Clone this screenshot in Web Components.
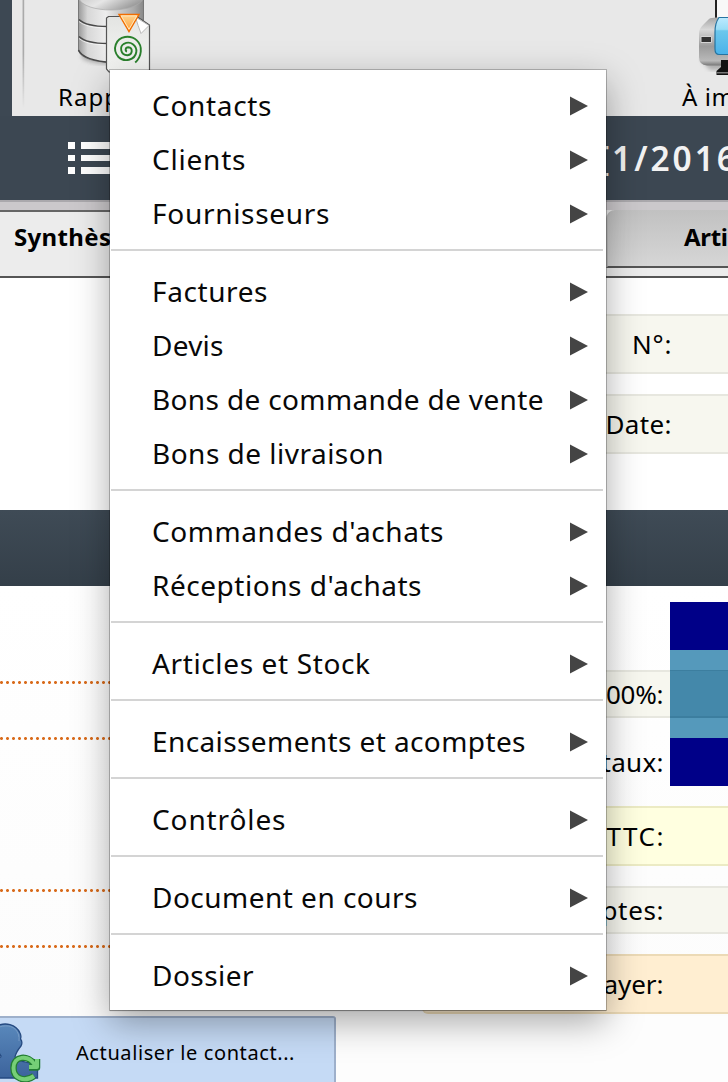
<!DOCTYPE html>
<html lang="fr">
<head>
<meta charset="utf-8">
<title>Rapports</title>
<style>
html,body{margin:0;width:728px;height:1082px;overflow:hidden;background:#fff}
body{font-family:"Noto Sans","Open Sans",sans-serif;color:#000}
</style>
</head>
<body>
<app-window></app-window>
<script>
const define = (name, html, setup) => customElements.define(name, class extends HTMLElement {
  connectedCallback() {
    if (this.shadowRoot) return;
    this.attachShadow({mode: 'open'}).innerHTML = html;
    if (setup) setup.call(this);
  }
});

/* A label whose tracking is adjusted so it spans the given width. */
define('tracked-text', `<style>:host{display:block;white-space:pre;width:max-content}span{display:inline-block}</style><span><slot></slot></span>`, function () {
  const w = parseFloat(this.getAttribute('w'));
  const span = this.shadowRoot.querySelector('span');
  const n = this.textContent.length;
  this.style.letterSpacing = ((w - span.getBoundingClientRect().width) / (n - 1)) + 'px';
  span.style.marginRight = -parseFloat(this.style.letterSpacing) + 'px';
});

define('menu-item', `<style>
:host{display:flex;height:54px;box-sizing:border-box;padding:0 18px 2px 42px;align-items:center;justify-content:space-between;font-size:28px;line-height:40px;color:#080808}
svg{display:block;width:19px;height:20px;margin-top:2px}</style>
<slot></slot><svg viewBox="0 0 19 20"><path d="M1 .5L19 10L1 19.5Z" fill="#444"/></svg>`);

define('menu-separator', `<style>:host{display:block;height:2px;margin:8px 3px 14px 1px;background:#d4d4d4}</style>`);

define('popup-menu', `<style>:host{display:block;box-sizing:border-box;width:496px;height:940px;padding:9px 0 7px;background:#fff;box-shadow:0 0 0 1px rgba(0,0,0,.22),0 1px 1px rgba(0,0,0,.22),0 12px 34px rgba(0,0,0,.34)}</style><slot></slot>`);

define('database-icon', `<style>:host{display:block;width:74px;height:72px}svg{display:block}</style>
<svg width="74" height="72" viewBox="0 0 74 72"><defs>
<linearGradient id="m"><stop stop-color="#999"/><stop offset=".14" stop-color="#d7d7d7"/><stop offset=".42" stop-color="#ededed"/><stop offset=".85" stop-color="#aaa"/><stop offset="1" stop-color="#888"/></linearGradient>
<linearGradient id="t" x2="1" y2=".5"><stop stop-color="#c0c0c0"/><stop offset=".5" stop-color="#e6e6e6"/><stop offset="1" stop-color="#999"/></linearGradient>
<filter id="b"><feGaussianBlur stdDeviation="2"/></filter></defs>
<ellipse cx="42" cy="56" rx="31" ry="8" fill="#777" opacity=".55" filter="url(#b)"/>
<path d="M8.500-8V51C14 66 68 66 73.500 51V-8Z" fill="url(#m)" stroke="#777" stroke-width="1"/>
<path d="M8.500-2C14 14 68 14 73.500-2V-8H8.500Z" fill="url(#t)" stroke="#aaa" stroke-width=".7"/>
<g fill="none" stroke="#fafafa" opacity=".7"><path d="M9 21.500C17 28.500 37 28.500 50 27.500M9 38.500C17 45.500 37 45.500 50 44.500"/></g>
<g fill="none" stroke="#484848" stroke-width="1.500"><path d="M9 19.500C17 27 37 27 50 26M9 36.500C17 44 37 44 50 43M8.500 50C12 58 25 61.500 43 62.500"/></g>
</svg>`);

define('report-badge', `<style>:host{display:block;width:46px;height:62px}svg{display:block}</style>
<svg width="46" height="62" viewBox="0 0 46 62"><defs>
<linearGradient id="o" x2="0" y2="1"><stop stop-color="#ffd592"/><stop offset="1" stop-color="#ff9e33"/></linearGradient>
<linearGradient id="p" x2="0" y2="1"><stop stop-color="#e3e4e2"/><stop offset="1" stop-color="#f6f7f5"/></linearGradient></defs>
<path d="M3.500 4.500H32L44.500 13V60H4L1.500 57V6Z" fill="url(#p)" stroke="#555" stroke-width="1.200"/>
<path d="M30.500 5L44 13.500L36 21.500Q33 14 30.500 5Z" fill="#fff" stroke="#aaa" stroke-width=".8"/>
<path d="M14 2.500H34L24 19.500Z" fill="url(#o)" stroke="#f26d00" stroke-width="1.400"/>
<path d="M16.200 3.900H31.800L24 17.300Z" fill="none" stroke="#ffe7bd"/>
<path transform="translate(-.5 0)" d="M22.500 39.500C20.500 39 20.600 35.300 23.800 35.200C28.500 35.500 28.500 42.700 23 43.200C15.800 43.300 14.800 34.500 19.500 31.800C26 28.300 32.600 33.500 31.800 40C30.500 48.500 19.500 50.500 14 45C7 37 11.500 26.500 20.500 25C30 23.700 37.200 30.500 36.300 39.500C35.900 44 33.800 47.800 30.700 50.500" fill="none" stroke="#2a812d" stroke-width="1.900"/>
</svg>`);

define('printer-icon', `<style>:host{display:block;width:30px;height:78px}svg{display:block}</style>
<svg width="30" height="78" viewBox="0 0 30 78"><defs>
<linearGradient id="g" x2="0" y2="1"><stop stop-color="#a5a5a5"/><stop offset=".25" stop-color="#d8d8d8"/><stop offset=".6" stop-color="#9b9b9b"/><stop offset=".9" stop-color="#b9b9b9"/><stop offset="1" stop-color="#777"/></linearGradient>
<linearGradient id="c" x2="0" y2="1"><stop stop-color="#bdeaff"/><stop offset=".32" stop-color="#9addf6"/><stop offset=".36" stop-color="#6cc7ec"/><stop offset="1" stop-color="#4ab2ea"/></linearGradient>
<filter id="b"><feGaussianBlur stdDeviation="2"/></filter></defs>
<path d="M2 58L12 70H30V60Z" fill="#888" opacity=".6" filter="url(#b)"/>
<path d="M17 0H19V19H17Z" fill="#222"/><path d="M19 0H30V18H19Z" fill="#f8f8f8"/>
<path d="M1 33Q1 29 5 25L11 19Q13 17.500 18 17.500H30V65.500H9Q1 65 1 57Z" fill="url(#g)"/>
<path d="M21 17.500H32V54.500H21Q17 54.500 17 49V32Q17 23 21 17.500Z" fill="url(#c)" stroke="#2674a1" stroke-width="1.200"/>
<path d="M3 36.500H13.500V42.500H3Z" fill="#333" stroke="#d4d4d4" stroke-width="1"/>
<path d="M23 60H30V75H18.500V71L23 67Z" fill="#111"/><path d="M19 72H30V73.500H19Z" fill="#777"/>
</svg>`);

define('list-icon', `<style>:host{display:grid;grid-template-columns:7px 31px;gap:6px;grid-auto-rows:6.500px}i{background:#fff}</style><i></i><i></i><i></i><i></i><i></i><i></i>`);

define('contact-icon', `<style>:host{display:block;width:42px;height:66px}svg{display:block}</style>
<svg width="42" height="66" viewBox="0 0 42 66"><defs><linearGradient id="u" x2="0" y2="1"><stop stop-color="#5988bb"/><stop offset="1" stop-color="#3c639c"/></linearGradient></defs>
<path d="M-3 8C5 4 16 6 20 15Q21.500 18 20.500 21Q23 24 21 28Q16 34 15 39C17 45 30 43 37.500 48V60H-3V40Q1 40 1 38L-3 32Z" fill="url(#u)" stroke="#254a81" stroke-width="1.300"/>
<path d="M-1 9C8 6.500 15 8 18.300 16Q19.500 20 19 23" fill="none" stroke="#769ac4"/>
<g fill="none" stroke-linejoin="round"><path d="M37 41V49.500H29M35 47C28 36 13.500 38 13.500 50C13.500 60 24 65 34 58" stroke="#237d33" stroke-width="6.500"/>
<path d="M37 41V49H29M35 47C28 36 13.500 38 13.500 50C13.500 60 24 65 34 58" stroke="#76cf77" stroke-width="4"/></g></svg>`);

define('tool-bar', `<style>:host{display:flex;height:116px;background:#3d4853;padding-left:12px;overflow:hidden}
.in{flex:1;display:flex;justify-content:space-between;background:#e8e8e8;position:relative}
.rule{width:3px;height:108px;margin-left:10px;background:linear-gradient(90deg,#ddd,#aaa,#f4f4f4);-webkit-mask-image:linear-gradient(#000 50%,transparent)}
.tool{font-size:24px;line-height:32px}.db{width:110px;margin-left:33px;margin-right:auto}.db database-icon{margin:0 0 9px 12px}
.pr{width:46px}.pr printer-icon{margin:0 0 3px 16px}
report-badge{position:absolute;left:93px;top:12px}</style>
<div class="in"><div class="rule"></div><div class="tool db"><database-icon></database-icon><tracked-text w="61">Rapp</tracked-text></div>
<div class="tool pr"><printer-icon></printer-icon><tracked-text w="52">À im</tracked-text></div><report-badge></report-badge></div>`);

define('title-bar', `<style>:host{display:flex;justify-content:space-between;height:84px;background:#3c4752;overflow:hidden}
list-icon{margin:26px 0 0 68px}.t{color:#f2f2f2;font-size:33.500px;font-weight:600;line-height:84px;width:130px}</style>
<list-icon></list-icon><div class="t"><tracked-text w="138">[1/2016</tracked-text></div>`);

define('tab-strip', `<style>:host{display:flex;box-sizing:border-box;height:78px;border-top:2px solid #aaa8ac;background:#cbc8cb;padding-top:8px;font-size:24px;font-weight:700;line-height:32px}
.a{box-sizing:border-box;height:68px;background:#ececec;border-top:2px solid #666;border-bottom:2px solid #555}
.a{width:606px;padding:9px 0 0 14px}.b{flex:1;height:68px;background:#ececec;box-sizing:border-box;border-bottom:2px solid #555}
.i{box-sizing:border-box;height:58px;border-bottom:2px solid #555;background:linear-gradient(#c1c1c1,#d6d6d6);border-left:2px solid #bbb;border-radius:9px 0 0 0;padding:11px 0 0 76px;overflow:hidden}</style>
<div class="a"><tracked-text w="97">Synthès</tracked-text></div><div class="b"><div class="i"><tracked-text w="44">Arti</tracked-text></div></div>`);

define('field-row', `<style>:host{display:flex;box-sizing:border-box;justify-content:flex-end;align-items:center;font-size:26px;padding-right:64.500px;height:60px;background:var(--c,#f7f7ef);border-top:2px solid var(--l,#e7e7df);border-bottom:2px solid var(--l,#e7e7df);border-radius:6px 0 0 6px}</style><slot></slot>`);

define('header-form', `<style>:host{display:flex;flex-direction:column;gap:20px;height:232px;box-sizing:border-box;padding:36px 0 0 422px;background:#fff}field-row{padding-right:56.500px}</style>
<field-row><tracked-text w="39.5">N°:</tracked-text></field-row><field-row><tracked-text w="66">Date:</tracked-text></field-row>`);

define('dotted-lines', `<style>:host{display:flex;flex-direction:column}i{height:3px;background:radial-gradient(circle at 1.500px 1.500px,#d86b1c 1px,rgba(240,150,80,.35) 1.700px,transparent 2px) 0 0/6px 3px repeat-x}
.l1{margin-top:95px}.l2,.l4{margin-top:53px}.l3{margin-top:149px}</style><i class="l1"></i><i class="l2"></i><i class="l3"></i><i class="l4"></i>`);

define('colour-block', `<style>:host{display:flex;flex-direction:column;width:58px;height:184px}.n{height:48px;background:#000088}.m{height:88px;background:linear-gradient(#5599bb 0 20px,#3c7e9f 20px 21px,#4488aa 21px 66px,#3c7e9f 66px 68px,#5599bb 68px)}</style><div class="n"></div><div class="m"></div><div class="n"></div>`);

define('totals-form', `<style>:host{display:flex;flex-direction:column;height:496px;position:relative}
field-row{flex:none}.p{margin-top:84px;height:48px}.x{--c:transparent;--l:transparent;height:48px;margin:20px 0}.ttc{--c:#ffffe0;--l:#ecebc4;height:60px}.ac{margin:20px 0;height:48px}.pay{--c:#ffeed1;--l:#ecdab6}
colour-block{position:absolute;right:0;top:16px}</style>
<field-row class="p"><tracked-text w="57.5">00%:</tracked-text></field-row>
<field-row class="x"><tracked-text w="62">taux:</tracked-text></field-row>
<field-row class="ttc"><tracked-text w="57">TTC:</tracked-text></field-row>
<field-row class="ac"><tracked-text w="62">ptes:</tracked-text></field-row>
<field-row class="pay"><tracked-text w="60">ayer:</tracked-text></field-row><colour-block></colour-block>`);

define('action-button', `<style>:host{display:flex;box-sizing:border-box;width:336px;height:68px;border:2px solid #9eb0cb;border-left:0;border-radius:0 3px 0 0;background:#c5daf5;overflow:hidden}
.l{font-size:20px;line-height:28px;margin:21px 0 0 34px}</style><contact-icon></contact-icon><div class="l"><tracked-text w="218.5">Actualiser le contact...</tracked-text></div>`);

define('app-window', `<style>:host{display:block;position:relative;width:728px;height:1082px;overflow:hidden}
.band{height:76px;background:linear-gradient(#3f4b56,#343f49)}.body{display:grid;grid-template-columns:110px 306px;justify-content:space-between;height:430px;background:linear-gradient(#fff,#fcfcfc)}
.foot{height:66px;background:#fdfdfd}popup-menu{position:absolute;left:110px;top:70px}</style>
<tool-bar></tool-bar><title-bar></title-bar><tab-strip></tab-strip><header-form></header-form><div class="band"></div>
<div class="body"><dotted-lines></dotted-lines><totals-form></totals-form></div><div class="foot"><action-button></action-button></div>
<popup-menu></popup-menu>`, function () {
  const groups = [
    [['Contacts',119],['Clients',93],['Fournisseurs',177]],
    [['Factures',115],['Devis',71],['Bons de commande de vente',391],['Bons de livraison',231]],
    [["Commandes d'achats",291],["Réceptions d'achats",269]],
    [['Articles et Stock',217.5]],
    [['Encaissements et acomptes',373]],
    [['Contrôles',133]],
    [['Document en cours',265]],
    [['Dossier',101]]
  ];
  this.shadowRoot.querySelector('popup-menu').innerHTML = groups.map(g => g.map(([t, w]) =>
    `<menu-item><tracked-text w="${w + .5}">${t}</tracked-text></menu-item>`).join('')).join('<menu-separator></menu-separator>');
});
</script>
</body>
</html>
